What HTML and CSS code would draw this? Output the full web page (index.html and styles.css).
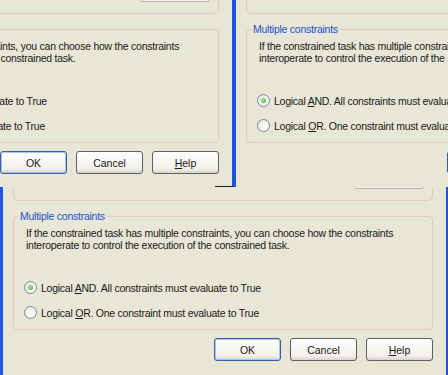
FILE: index.html
```html
<!DOCTYPE html>
<html lang="en">
  <head>
    <meta charset="UTF-8" />
    <meta name="viewport" content="width=device-width, initial-scale=1.0" />
    <title>Multiple constraints</title>
    <link rel="stylesheet" href="styles.css">
  </head>
  <body>
    <div class="desktop">

      <!-- Window behind, left -->
      <div class="window win-a">
        <div class="client">
          <div class="prev-group"><div class="prev-field"></div></div>
          <fieldset class="group">
            <legend>Multiple constraints</legend>
            <p>If the constrained task has multiple constraints, you can choose how the constraints<br />interoperate to control the execution of the constrained task.</p>
            <label class="radio-row first"><span class="radio checked"></span><span>Logical <u>A</u>ND. All constraints must evaluate to True</span></label>
            <label class="radio-row"><span class="radio"></span><span>Logical <u>O</u>R. One constraint must evaluate to True</span></label>
          </fieldset>
          <div class="buttons">
            <button class="btn default">OK</button>
            <button class="btn">Cancel</button>
            <button class="btn"><u>H</u>elp</button>
          </div>
        </div>
      </div>

      <!-- Window behind, right -->
      <div class="window win-b">
        <div class="client">
          <div class="prev-group"><div class="prev-field"></div></div>
          <fieldset class="group">
            <legend>Multiple constraints</legend>
            <p>If the constrained task has multiple constraints, you can choose how the constraints<br />interoperate to control the execution of the constrained task.</p>
            <label class="radio-row first"><span class="radio checked"></span><span>Logical <u>A</u>ND. All constraints must evaluate to True</span></label>
            <label class="radio-row"><span class="radio"></span><span>Logical <u>O</u>R. One constraint must evaluate to True</span></label>
          </fieldset>
          <div class="buttons">
            <button class="btn default">OK</button>
            <button class="btn">Cancel</button>
            <button class="btn"><u>H</u>elp</button>
          </div>
        </div>
      </div>

      <div class="seam"></div>

      <!-- Front window -->
      <div class="window win-c">
        <div class="client">
          <div class="prev-group"><div class="prev-field"></div></div>
          <fieldset class="group">
            <legend>Multiple constraints</legend>
            <p>If the constrained task has multiple constraints, you can choose how the constraints<br />interoperate to control the execution of the constrained task.</p>
            <label class="radio-row first"><span class="radio checked"></span><span>Logical <u>A</u>ND. All constraints must evaluate to True</span></label>
            <label class="radio-row"><span class="radio"></span><span>Logical <u>O</u>R. One constraint must evaluate to True</span></label>
          </fieldset>
          <div class="buttons">
            <button class="btn default">OK</button>
            <button class="btn">Cancel</button>
            <button class="btn"><u>H</u>elp</button>
          </div>
        </div>
      </div>

    </div>
  </body>
</html>
```

FILE: styles.css
```css
body {
  margin: 0;
  font-family: "Liberation Sans", Arial, sans-serif;
  font-size: 10.5px;
  letter-spacing: -0.25px;
  color: #1a1a1a;
}
.desktop {
  position: relative;
  width: 448px;
  height: 375px;
  overflow: hidden;
  background-color: #e8e6d6;
}
.window {
  position: absolute;
  width: 449px;
  box-sizing: border-box;
  overflow: hidden;
  border-left: 3px solid #2152e0;
  border-right: 3px solid #2152e0;
  background-color: #e8e6d6;
}
.win-a {
  left: -214px;
  top: 0;
  height: 187px;
}
.win-b {
  left: 233px;
  top: 0;
  height: 187px;
}
.win-c {
  left: 0;
  top: 187px;
  height: 188px;
}
.seam {
  position: absolute;
  left: 215px;
  top: 186px;
  width: 18px;
  height: 1px;
  background-color: #1a1a1a;
  z-index: 2;
}
.client {
  padding: 0 13px 0 10px;
}
.prev-group {
  height: 13px;
  border: 1px solid #e8c9ba;
  border-top: none;
  border-radius: 0 0 5px 5px;
  display: flex;
  justify-content: flex-end;
  padding-right: 9px;
}
.prev-field {
  width: 66px;
  height: 1px;
  border: 1px solid #aeada4;
  border-top: none;
  border-radius: 0 0 2px 2px;
  background-color: #f4f3ee;
}
.group {
  margin: 9px 0 0;
  padding: 0 0 10px;
  min-width: 0;
  border: 1px solid #e8c9ba;
  border-radius: 4px;
}
.group legend {
  margin-left: 4px;
  padding: 0 2px;
  line-height: 13px;
  color: #1f4ecf;
}
.group p {
  margin: 4px 0 0 12px;
  line-height: 12px;
  white-space: nowrap;
}
.radio-row {
  display: flex;
  align-items: center;
  gap: 4px;
  height: 13px;
  margin: 12px 0 0 10px;
  white-space: nowrap;
}
.radio-row.first {
  margin-top: 30px;
}
.radio {
  display: inline-flex;
  flex-shrink: 0;
  align-items: center;
  justify-content: center;
  width: 13px;
  height: 13px;
  box-sizing: border-box;
  border: 1px solid #7f8a96;
  border-radius: 50%;
  background: radial-gradient(circle at 65% 65%, #ffffff, #e2e1da);
}
.radio.checked::after {
  content: "";
  width: 5px;
  height: 5px;
  border-radius: 50%;
  background: radial-gradient(circle at 40% 40%, #a9e8a9, #2aa52a);
}
.buttons {
  display: flex;
  justify-content: flex-end;
  gap: 9px;
  margin-top: 8px;
}
.btn {
  width: 67px;
  height: 23px;
  padding: 0;
  font: inherit;
  color: #1a1a1a;
  border: 1px solid #5a6068;
  border-radius: 3px;
  background: linear-gradient(#ffffff, #f1f0ea 80%, #d8d4c8);
}
.btn.default {
  border-color: #3b5f9e;
  box-shadow: inset 0 0 0 1px #aac4ef;
}
```
